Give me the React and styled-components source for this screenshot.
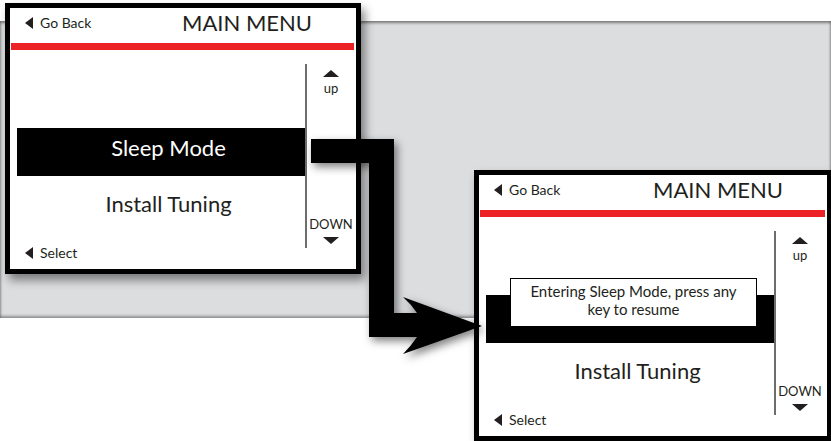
import React from 'react';
import styled, { createGlobalStyle } from 'styled-components';

const GlobalStyle = createGlobalStyle`
  html, body {
    margin: 0;
    padding: 0;
    background: #ffffff;
  }
  body {
    font-family: Lato, "Open Sans", sans-serif;
    color: #231f20;
  }
`;

const Canvas = styled.div`
  position: relative;
  width: 831px;
  height: 441px;
  overflow: hidden;
  padding-top: 21px;
  box-sizing: border-box;
`;

const Band = styled.div`
  height: 297px;
  background: #dcdddf;
  box-shadow: inset 0 2px 3px rgba(0, 0, 0, 0.45), inset 0 -2px 3px rgba(0, 0, 0, 0.35);
`;

const Screen = styled.div`
  position: absolute;
  left: ${p => p.x}px;
  top: ${p => p.y}px;
  width: ${p => p.w}px;
  height: 271px;
  box-sizing: border-box;
  border: 5px solid #000;
  background: #fff;
  display: flex;
  flex-direction: column;
  box-shadow: 4px 6px 9px rgba(0, 0, 0, 0.45);
`;

const Header = styled.div`
  height: 35px;
  box-sizing: border-box;
  padding: 0 0 5px 15px;
  display: flex;
  align-items: center;
  flex-shrink: 0;
`;

const LeftTriangle = styled.span`
  width: 0;
  height: 0;
  border-top: 6.5px solid transparent;
  border-bottom: 6.5px solid transparent;
  border-right: 8px solid #231f20;
  margin-right: 7px;
`;

const SmallLabel = styled.span`
  font-size: 14px;
  line-height: 18px;
`;

const Title = styled.div`
  margin-left: auto;
  width: 174px;
  font-size: 22px;
  line-height: 28px;
  white-space: nowrap;
`;

const RedBar = styled.div`
  height: 7px;
  margin: 0 2px 0 1px;
  background: #ec2227;
  flex-shrink: 0;
`;

const Body = styled.div`
  flex: 1;
  display: flex;
`;

const MainColumn = styled.div`
  width: 295px;
  display: flex;
  flex-direction: column;
  padding-top: 78px;
  box-sizing: border-box;
`;

const MenuRow = styled.div`
  height: ${p => p.h}px;
  box-sizing: border-box;
  margin-left: 7px;
  padding: 0 0 ${p => p.lift}px 15px;
  display: flex;
  align-items: center;
  justify-content: center;
  font-size: 22px;
  background: ${p => (p.selected ? '#000' : 'transparent')};
  color: ${p => (p.selected ? '#fff' : '#231f20')};
  flex-shrink: 0;
`;

const Footer = styled.div`
  margin-top: auto;
  margin-bottom: 6px;
  height: 20px;
  display: flex;
  align-items: center;
  padding-left: 15px;
`;

const SideColumn = styled.div`
  margin-top: 14px;
  height: 184px;
  width: 50px;
  border-left: 2px solid #6d6d6d;
  display: flex;
  flex-direction: column;
  align-items: center;
  justify-content: space-between;
  padding: 6px 0 4px;
  box-sizing: border-box;
`;

const ScrollGroup = styled.div`
  display: flex;
  flex-direction: column;
  align-items: center;
  gap: ${p => p.gap}px;
`;

const Arrow = styled.span`
  width: 0;
  height: 0;
  border-left: 8px solid transparent;
  border-right: 8px solid transparent;
  ${p => (p.down ? 'border-top: 7px solid #231f20;' : 'border-bottom: 7px solid #231f20;')}
`;

const ScrollLabel = styled.span`
  font-size: 13px;
  line-height: 14px;
`;

const Popup = styled.div`
  position: absolute;
  left: 31px;
  top: 103px;
  width: 247px;
  height: 49px;
  box-sizing: border-box;
  border: 1px solid #000;
  background: #fff;
  display: flex;
  align-items: center;
  justify-content: center;
  text-align: center;
  font-size: 15px;
  line-height: 18px;
  padding: 0 8px 6px;
`;

const Connector = styled.svg`
  position: absolute;
  left: 0;
  top: 0;
  width: 831px;
  height: 441px;
  pointer-events: none;
  filter: drop-shadow(3px 4px 4px rgba(0, 0, 0, 0.5));
`;

const MenuScreen = ({ x, y, w, sleeping }) => (
  <Screen x={x} y={y} w={w}>
    <Header>
      <LeftTriangle />
      <SmallLabel>Go Back</SmallLabel>
      <Title>MAIN MENU</Title>
    </Header>
    <RedBar />
    <Body>
      <MainColumn>
        <MenuRow h={48} lift={10} selected>{sleeping ? '' : 'Sleep Mode'}</MenuRow>
        <MenuRow h={60} lift={5}>Install Tuning</MenuRow>
        <Footer>
          <LeftTriangle />
          <SmallLabel>Select</SmallLabel>
        </Footer>
      </MainColumn>
      <SideColumn>
        <ScrollGroup gap={4}>
          <Arrow />
          <ScrollLabel>up</ScrollLabel>
        </ScrollGroup>
        <ScrollGroup gap={6}>
          <ScrollLabel>DOWN</ScrollLabel>
          <Arrow down />
        </ScrollGroup>
      </SideColumn>
    </Body>
    {sleeping && <Popup>Entering Sleep Mode, press any key to resume</Popup>}
  </Screen>
);

export default function App() {
  return (
    <>
      <GlobalStyle />
      <Canvas>
        <Band />
        <MenuScreen x={5} y={3} w={356} />
        <MenuScreen x={474} y={170} w={358} sleeping />
        <Connector viewBox="0 0 831 441">
          <path
            d="M311 139 L394 139 L394 313 L417 313 Q411 304 403 297 L482 326 L403 354 Q411 346 417 337 L369 337 L369 163 L311 163 Z"
            fill="#000"
          />
        </Connector>
      </Canvas>
    </>
  );
}
